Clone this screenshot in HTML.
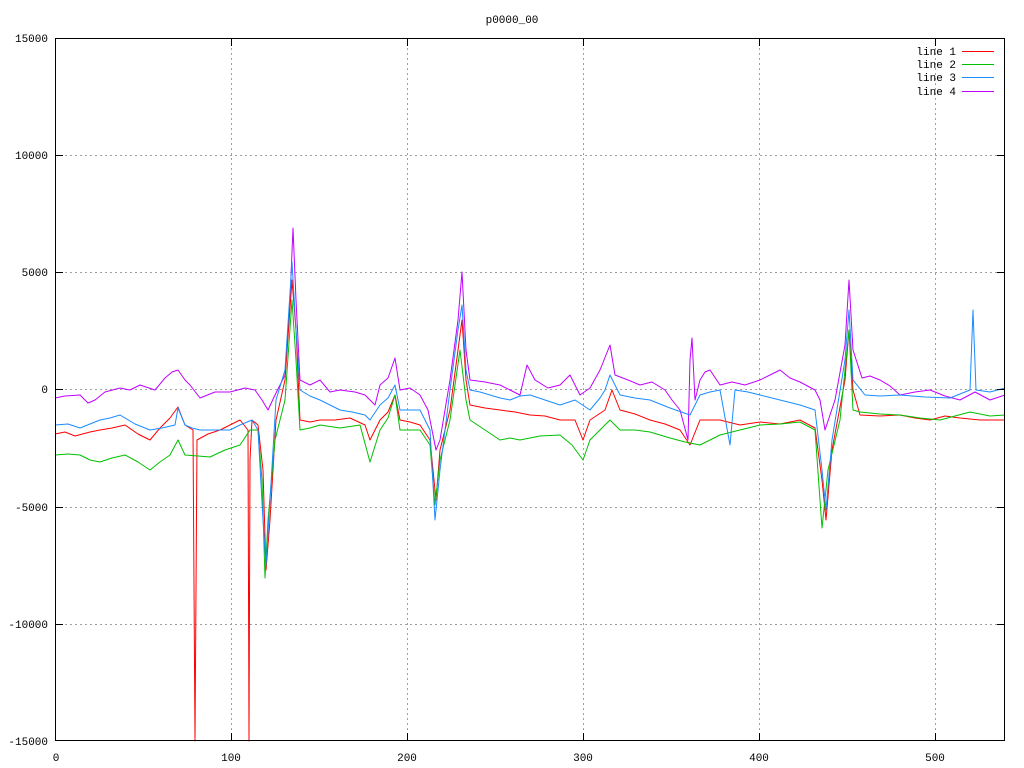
<!DOCTYPE html>
<html><head><style>html,body{margin:0;padding:0;background:#fff}svg{display:block}text{font-family:"Liberation Mono","DejaVu Sans Mono",monospace;font-size:11px;fill:#000}</style></head>
<body>
<svg width="1024" height="768" viewBox="0 0 1024 768" xmlns="http://www.w3.org/2000/svg">
<rect width="1024" height="768" fill="#fff"/>
<g stroke="#a0a0a0" stroke-width="1" stroke-dasharray="2,3" shape-rendering="crispEdges">
<line x1="55" y1="155.5" x2="1005" y2="155.5"/><line x1="55" y1="272.5" x2="1005" y2="272.5"/><line x1="55" y1="389.5" x2="1005" y2="389.5"/><line x1="55" y1="507.5" x2="1005" y2="507.5"/><line x1="55" y1="624.5" x2="1005" y2="624.5"/>
<line x1="231.5" y1="38" x2="231.5" y2="741"/><line x1="407.5" y1="38" x2="407.5" y2="741"/><line x1="583.5" y1="38" x2="583.5" y2="741"/><line x1="759.5" y1="38" x2="759.5" y2="741"/><line x1="935.5" y1="38" x2="935.5" y2="741"/>
</g>
<g fill="none" stroke-width="1" stroke-linejoin="round">
<polyline stroke="#c000ff" points="55,398 65,396 80,395 88,403 95,400 105,392 120,388 130,390 140,385 155,390 165,378 172,372 178,370 185,380 190,385 200,398 215,392 230,392 245,388 255,390 262,400 268,410 275,395 285,375 290,300 293,228 296,300 300,380 310,385 320,380 330,392 340,390 355,392 365,395 375,405 380,385 388,378 395,358 400,390 410,388 420,395 428,410 436,450 440,440 450,380 458,320 462,272 466,350 470,380 485,382 500,385 510,390 520,395 527,365 535,380 548,388 560,385 570,375 580,395 590,388 600,370 610,345 615,375 628,380 640,385 652,382 665,390 672,400 680,410 684,425 688,440 690,360 692,338 695,400 700,380 705,372 710,370 720,385 732,382 745,385 760,380 770,375 780,370 790,378 800,382 815,390 820,400 825,430 835,400 845,345 849,280 853,350 862,378 870,376 880,380 890,386 900,395 915,392 930,390 945,396 960,400 975,392 990,400 1005,395"/>
<polyline stroke="#ff0000" points="55,434 65,432 75,436 90,432 100,430 112,428 125,425 138,434 150,440 160,428 170,418 178,407 185,425 193,430 195,741 197,440 208,434 220,430 230,425 240,420 248,430 249,741 250,460 252,420 258,425 263,470 266,570 270,520 276,420 285,380 292,280 296,330 300,420 310,422 320,420 335,420 350,418 365,425 370,440 380,420 388,412 395,395 400,420 410,422 420,425 430,440 436,500 440,450 450,410 458,350 462,320 466,380 470,405 485,408 500,410 515,412 530,415 545,416 560,420 575,420 583,440 590,420 605,410 612,390 620,410 635,414 650,420 665,424 680,430 690,445 700,420 710,420 720,420 740,425 760,422 780,424 800,420 815,428 822,480 826,520 832,450 845,380 849,330 853,390 860,415 880,416 900,415 915,418 930,420 945,416 960,418 980,420 1005,420"/>
<polyline stroke="#00c000" points="55,455 68,454 80,455 90,460 100,462 112,458 125,455 138,462 150,470 160,462 170,455 178,440 185,455 198,456 210,457 225,450 240,445 250,430 258,430 262,480 265,578 268,520 275,440 285,400 292,300 296,360 300,430 310,428 320,425 340,428 360,425 370,462 380,430 388,418 395,395 400,430 410,430 420,430 430,445 435,505 440,460 450,420 460,350 466,400 470,420 485,430 500,440 510,438 520,440 540,436 560,435 572,445 583,460 590,440 600,430 610,420 620,430 635,430 650,432 670,438 685,442 700,445 710,440 720,435 740,430 760,425 780,424 800,422 815,430 822,528 828,470 840,420 849,330 853,410 860,412 880,414 900,415 920,418 940,420 955,416 970,412 990,416 1005,415"/>
<polyline stroke="#1a8cff" points="55,425 68,424 80,428 90,424 100,420 110,418 120,415 135,424 150,430 162,428 175,425 178,408 185,425 192,428 200,430 215,430 230,430 240,425 252,420 258,430 263,520 266,565 270,500 276,400 285,370 292,262 296,330 300,390 310,396 320,400 330,405 340,410 352,412 365,415 370,420 380,405 388,398 395,385 400,410 410,410 420,410 430,430 435,520 440,470 450,390 458,330 462,305 466,370 470,390 480,392 490,395 500,398 510,400 520,396 530,395 545,400 560,405 575,400 590,410 600,398 605,390 610,375 620,395 635,398 650,400 670,408 690,415 700,395 710,392 720,390 730,445 735,390 748,392 760,395 780,400 800,405 815,410 822,470 826,510 832,440 845,360 849,310 853,380 865,395 880,396 900,395 925,397 950,398 960,394 970,390 973,310 976,390 990,392 1005,388"/>
</g>
<rect x="55.5" y="38.5" width="949" height="702" fill="none" stroke="#000" stroke-width="1" shape-rendering="crispEdges"/>
<g stroke="#000" stroke-width="1" shape-rendering="crispEdges">
<line x1="231.5" y1="741" x2="231.5" y2="733"/><line x1="407.5" y1="741" x2="407.5" y2="733"/><line x1="583.5" y1="741" x2="583.5" y2="733"/><line x1="759.5" y1="741" x2="759.5" y2="733"/><line x1="935.5" y1="741" x2="935.5" y2="733"/>
<line x1="231.5" y1="38" x2="231.5" y2="46"/><line x1="407.5" y1="38" x2="407.5" y2="46"/><line x1="583.5" y1="38" x2="583.5" y2="46"/><line x1="759.5" y1="38" x2="759.5" y2="46"/><line x1="935.5" y1="38" x2="935.5" y2="46"/>
<line x1="55" y1="155.5" x2="63" y2="155.5"/><line x1="55" y1="272.5" x2="63" y2="272.5"/><line x1="55" y1="389.5" x2="63" y2="389.5"/><line x1="55" y1="507.5" x2="63" y2="507.5"/><line x1="55" y1="624.5" x2="63" y2="624.5"/>
<line x1="1005" y1="155.5" x2="997" y2="155.5"/><line x1="1005" y1="272.5" x2="997" y2="272.5"/><line x1="1005" y1="389.5" x2="997" y2="389.5"/><line x1="1005" y1="507.5" x2="997" y2="507.5"/><line x1="1005" y1="624.5" x2="997" y2="624.5"/>
</g>
<text x="512" y="23" text-anchor="middle">p0000_00</text>
<g text-anchor="end">
<text x="48" y="42">15000</text><text x="48" y="159">10000</text><text x="48" y="276">5000</text><text x="48" y="393">0</text><text x="48" y="511">-5000</text><text x="48" y="628">-10000</text><text x="48" y="745">-15000</text>
</g>
<g text-anchor="middle">
<text x="56" y="761">0</text><text x="231" y="761">100</text><text x="407" y="761">200</text><text x="583" y="761">300</text><text x="759" y="761">400</text><text x="935" y="761">500</text>
</g>
<g text-anchor="end">
<text x="956" y="55">line 1</text><text x="956" y="68">line 2</text><text x="956" y="81">line 3</text><text x="956" y="95">line 4</text>
</g>
<rect x="962" y="51" width="32" height="1" fill="#ff0000"/>
<rect x="962" y="64" width="32" height="1" fill="#00c000"/>
<rect x="962" y="77" width="32" height="1" fill="#1a8cff"/>
<rect x="962" y="91" width="32" height="1" fill="#c000ff"/>
</svg>
</body></html>
